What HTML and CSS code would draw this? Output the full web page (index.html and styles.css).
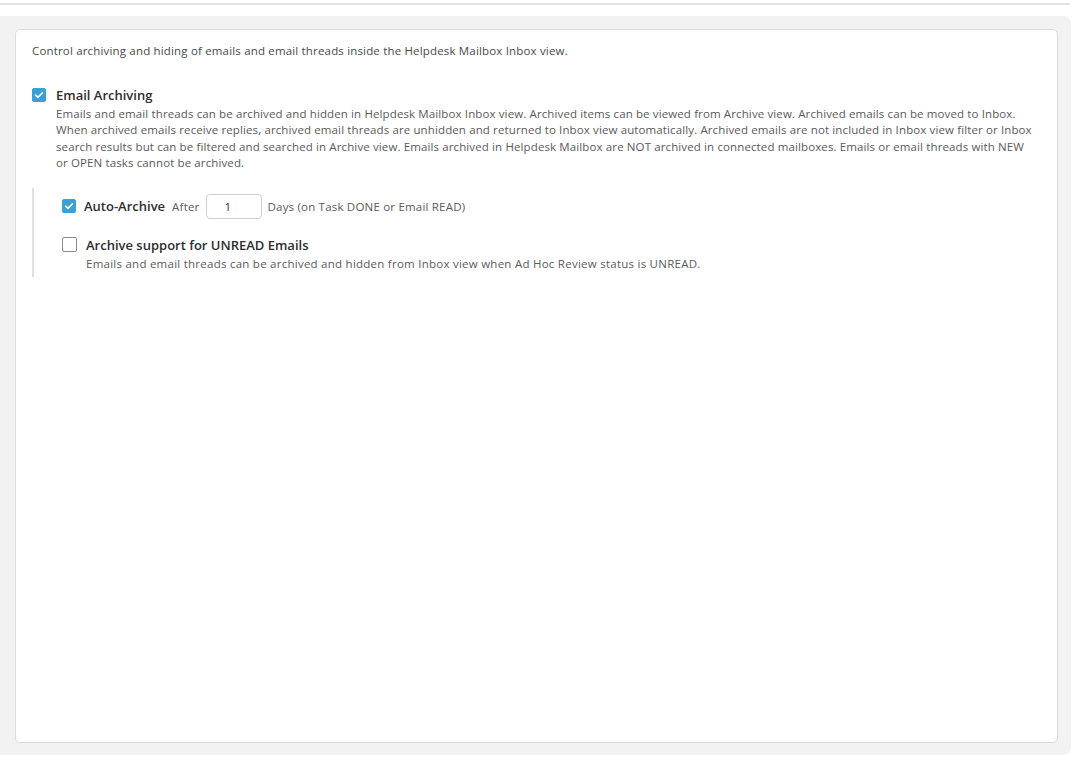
FILE: index.html
```html
<!DOCTYPE html>
<html>
<head>
<meta charset="utf-8">
<link rel="stylesheet" href="styles.css">
</head>
<body>
<div class="topline"></div>
<div class="panel">
  <div class="card">
    <p class="intro">Control archiving and hiding of emails and email threads inside the Helpdesk Mailbox Inbox view.</p>
    <div class="option">
      <span class="cb checked"><svg viewBox="0 0 14 14" width="14" height="14"><path d="M3.6 7.2 L6 9.4 L10.4 4.8" fill="none" stroke="#fff" stroke-width="1.6" stroke-linecap="round" stroke-linejoin="round"/></svg></span>
      <div class="opt-body">
        <div class="opt-title">Email Archiving</div>
        <div class="opt-desc main-desc">Emails and email threads can be archived and hidden in Helpdesk Mailbox Inbox view. Archived items can be viewed from Archive view. Archived emails can be moved to Inbox. When archived emails receive replies, archived email threads are unhidden and returned to Inbox view automatically. Archived emails are not included in Inbox view filter or Inbox search results but can be filtered and searched in Archive view. Emails archived in Helpdesk Mailbox are NOT archived in connected mailboxes. Emails or email threads with NEW or OPEN tasks cannot be archived.</div>
      </div>
    </div>
    <div class="sub">
      <div class="sub-row">
        <span class="cb checked"><svg viewBox="0 0 14 14" width="14" height="14"><path d="M3.6 7.2 L6 9.4 L10.4 4.8" fill="none" stroke="#fff" stroke-width="1.6" stroke-linecap="round" stroke-linejoin="round"/></svg></span>
        <span class="sub-title">Auto-Archive</span>
        <span class="sub-text">After</span>
        <input class="days" type="text" value="1">
        <span class="sub-text">Days (on Task DONE or Email READ)</span>
      </div>
      <div class="option sub-opt">
        <span class="cb"></span>
        <div class="opt-body">
          <div class="opt-title">Archive support for UNREAD Emails</div>
          <div class="opt-desc">Emails and email threads can be archived and hidden from Inbox view when Ad Hoc Review status is UNREAD.</div>
        </div>
      </div>
    </div>
  </div>
</div>
</body>
</html>
```
FILE: styles.css
```css
html, body {
  margin: 0;
  padding: 0;
  background: #fff;
  font-family: "Open Sans", "Noto Sans", sans-serif;
  color: #4a4a4a;
}
.topline {
  height: 2px;
  margin-top: 3px;
  width: 1070px;
  background: #e2e2e2;
}
.panel {
  margin-top: 11px;
  width: 1071px;
  height: 739px;
  background: #f2f2f2;
  border-radius: 0 8px 8px 0;
  padding: 13px 13px 12px 15px;
  box-sizing: border-box;
}
.card {
  background: #fff;
  border: 1px solid #dcdcdc;
  border-radius: 5px;
  height: 714px;
  box-sizing: border-box;
  padding: 13px 16px;
}
.intro {
  margin: 0;
  font-size: 11.5px;
  letter-spacing: 0.17px;
  line-height: 16px;
  color: #4a4a4a;
}
.option {
  display: flex;
  margin-top: 27px;
}
.cb {
  flex: none;
  width: 14px;
  height: 14px;
  border-radius: 2px;
  box-sizing: border-box;
  border: 1px solid #8c8c8c;
  background: #fff;
  display: inline-block;
  margin-right: 10px;
  margin-top: 2px;
}
.cb svg { display: block; margin: -1px; }
.cb.checked {
  background: #3c9fd7;
  border-color: #3c9fd7;
}
.opt-title {
  font-size: 13px;
  font-weight: 600;
  color: #2e2e2e;
  line-height: 18px;
}
.opt-desc {
  font-size: 11.5px;
  letter-spacing: 0.25px;
  line-height: 16.3px;
  color: #5a5a5a;
  margin-top: 2px;
}
.main-desc {
  letter-spacing: 0.12px;
  padding-right: 6px;
}
.sub {
  margin-top: 17px;
  margin-left: 0;
  border-left: 2px solid #e0e0e0;
  padding-left: 28px;
  padding-top: 5px;
  padding-bottom: 5px;
}
.sub-row {
  display: flex;
  align-items: center;
  height: 26px;
}
.sub-row .cb { margin-top: 0; margin-right: 8px; }
.sub-title {
  font-size: 13px;
  font-weight: 600;
  color: #2e2e2e;
  margin-right: 7px;
}
.sub-text {
  font-size: 11.5px;
  letter-spacing: 0.2px;
  color: #5a5a5a;
}
.days {
  width: 56px;
  height: 25px;
  box-sizing: border-box;
  border: 1px solid #cfcfcf;
  border-radius: 4px;
  margin: 0 6px 0 6px;
  padding: 0 0 0 18px;
  font-family: "Open Sans", sans-serif;
  font-size: 11.5px;
  color: #333;
  outline: none;
}
.sub-opt {
  margin-top: 17px;
}
.sub-opt .cb {
  width: 15px;
  height: 15px;
  margin-top: 1px;
  margin-right: 9px;
}
.sub-opt .opt-desc { margin-top: 2px; }
```
